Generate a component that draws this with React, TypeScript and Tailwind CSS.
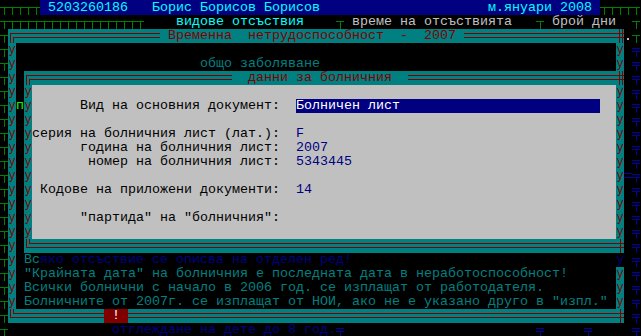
import React from 'react';

// DOS screen, 80 x 24 cells of 8 x 14 px

const GREEN = '#008000';
const BLUE = '#0000a8';

function place(items: [number, string][], len: number) {
  const a = Array(len).fill(' ');
  items.forEach(([at, s]) => {
    Array.from(s).forEach((ch, i) => {
      if (at + i < len) a[at + i] = ch;
    });
  });
  return a.join('');
}

function Tee({ color = GREEN, dbl = false }: { color?: string; dbl?: boolean }) {
  return (
    <svg width="8" height="14" className="block shrink-0">
      {dbl ? (
        <>
          <rect x="0" y="5" width="8" height="1" fill={color} />
          <rect x="0" y="8" width="8" height="1" fill={color} />
          <rect x="4" y="8" width="1" height="6" fill={color} />
        </>
      ) : (
        <>
          <rect x="0" y="6" width="8" height="1" fill={color} />
          <rect x="4" y="6" width="1" height="8" fill={color} />
        </>
      )}
    </svg>
  );
}

function Tees({ n }: { n: number }) {
  return (
    <>
      {Array.from({ length: n }).map((_, i) => (
        <Tee key={i} />
      ))}
    </>
  );
}

function S({ c, children }: { c: string; children?: React.ReactNode }) {
  return <span className={'block h-[14px] shrink-0 overflow-hidden whitespace-pre ' + c}>{children}</span>;
}

// mis-decoded vertical border glyph
function Y({ c = 'bg-[#008080] text-[#800000]' }: { c?: string }) {
  return (
    <span className={'block w-[8px] h-[14px] shrink-0 overflow-hidden text-center text-[12px] leading-[14px] ' + c}>у</span>
  );
}

// double horizontal line on teal
function DL({ c }: { c: string }) {
  return (
    <span className={'block h-[14px] shrink-0 bg-[#008080] pt-[4px] ' + c}>
      <span className="block h-[5px] border-y border-[#800000]" />
    </span>
  );
}

function Corner({ kind }: { kind: 'tl' | 'bl' | 'x' | 'xs' }) {
  const m = '#800000';
  return (
    <svg width="8" height="14" className="block shrink-0 bg-[#008080]">
      {kind === 'tl' && (
        <>
          <rect x="2" y="4" width="6" height="1" fill={m} />
          <rect x="2" y="4" width="1" height="10" fill={m} />
          <rect x="5" y="8" width="3" height="1" fill={m} />
          <rect x="5" y="8" width="1" height="6" fill={m} />
        </>
      )}
      {kind === 'bl' && (
        <>
          <rect x="2" y="0" width="1" height="9" fill={m} />
          <rect x="2" y="8" width="6" height="1" fill={m} />
          <rect x="5" y="0" width="1" height="5" fill={m} />
          <rect x="5" y="4" width="3" height="1" fill={m} />
        </>
      )}
      {kind === 'x' && (
        <>
          <rect x="0" y="4" width="8" height="1" fill={m} />
          <rect x="0" y="8" width="8" height="1" fill={m} />
          <rect x="3" y="0" width="1" height="14" fill={m} />
          <rect x="6" y="0" width="1" height="14" fill={m} />
        </>
      )}
      {kind === 'xs' && (
        <>
          <rect x="0" y="4" width="8" height="1" fill={m} />
          <rect x="0" y="8" width="8" height="1" fill={m} />
          <rect x="4" y="0" width="1" height="14" fill={m} />
        </>
      )}
    </svg>
  );
}

const Blk = () => <S c="w-[8px] bg-black" />;

// rows 3..21 share the outer window edges
function Outer({ children, r77, r78 }: { children: React.ReactNode; r77?: React.ReactNode; r78?: React.ReactNode }) {
  return (
    <div className="flex h-[14px]">
      <Tee />
      <Y />
      {children}
      {r77 ?? <Y />}
      {r78 ?? <Blk />}
      <Tee color={BLUE} dbl />
    </div>
  );
}

function Inner({ children, c2, r78 }: { children?: React.ReactNode; c2?: React.ReactNode; r78?: React.ReactNode }) {
  return (
    <Outer r78={r78}>
      {c2 ?? <Blk />}
      <Y />
      <div className="flex w-[584px] h-[14px] bg-[#c0c0c0]">{children}</div>
    </Outer>
  );
}

function Field({ label, at, value }: { label: string; at: number; value: string }) {
  return (
    <>
      <S c="w-[264px] text-black">{place([[at, label]], 33)}</S>
      <S c="w-[320px] text-[#000080]">{value}</S>
    </>
  );
}

export default function App() {
  return (
    <div className="w-[641px] h-[336px] overflow-hidden bg-black font-['Liberation_Mono',monospace] text-[13.33px] leading-[14px]">
      {/* row 0 */}
      <div className="flex items-end h-[15px]">
        <Tees n={5} />
        <span className="block w-[560px] h-[15px] pt-[1px] bg-[#000080] text-[#00ffff] whitespace-pre overflow-hidden">
          {place([[1, '5203260186'], [14, 'Борис Борисов Борисов'], [56, 'м.януари 2008']], 70)}
        </span>
        <Tees n={5} />
      </div>

      {/* row 1 */}
      <div className="flex h-[14px]">
        <Tees n={18} />
        <S c="w-[192px] text-[#00ffff]">{place([[4, 'видове отсъствия']], 24)}</S>
        <Tee />
        <S c="w-[192px] text-[#c0c0c0]">{place([[1, 'време на отсъствията']], 24)}</S>
        <Tee />
        <S c="w-[88px] text-[#c0c0c0]">{place([[1, 'брой дни']], 11)}</S>
        <Tee />
      </div>

      {/* row 2: outer window title */}
      <div className="flex h-[14px]">
        <Tee />
        <Corner kind="tl" />
        <DL c="w-[144px]" />
        <S c="w-[304px] bg-[#008080] text-[#800000]">{' Временна  нетрудоспособност  -  2007 '}</S>
        <DL c="w-[152px]" />
        <Corner kind="x" />
        <span className="block w-[8px] h-[14px] shrink-0 pl-[3px] pt-[9px]">
          <span className="block w-[2px] h-[2px] bg-[#c0c0c0]" />
        </span>
        <Tee />
      </div>

      {/* rows 3-4 */}
      <Outer>
        <S c="w-[600px]" />
      </Outer>
      <Outer>
        <S c="w-[600px] text-[#008080]">{place([[23, 'общо заболяване']], 75)}</S>
      </Outer>

      {/* row 5: inner window title */}
      <Outer r77={<Corner kind="x" />}>
        <Blk />
        <Corner kind="tl" />
        <DL c="w-[200px]" />
        <S c="w-[176px] bg-[#008080] text-[#800000]">{'  данни за болничния  '}</S>
        <DL c="w-[208px]" />
      </Outer>

      {/* rows 6-16: form */}
      <Inner />
      <Inner c2={<S c="w-[8px] text-[#00ff00]">п</S>}>
        <S c="w-[264px] text-black">{place([[6, 'Вид на основния документ:']], 33)}</S>
        <S c="w-[304px] bg-[#000080] text-white">Болничен лист</S>
        <S c="w-[16px]" />
      </Inner>
      <Inner />
      <Inner>
        <Field label="серия на болничния лист (лат.):" at={0} value="F" />
      </Inner>
      <Inner>
        <Field label="година на болничния лист:" at={6} value="2007" />
      </Inner>
      <Inner>
        <Field label="номер на болничния лист:" at={7} value="5343445" />
      </Inner>
      <Inner
        r78={
          <span className="block w-[8px] h-[14px] shrink-0 pt-[4px]">
            <span className="block h-[5px] border-y border-[#0000a8]" />
          </span>
        }
      />
      <Inner>
        <Field label="Кодове на приложени документи:" at={1} value="14" />
      </Inner>
      <Inner />
      <Inner>
        <Field label={'"партида" на "болничния":'} at={6} value="" />
      </Inner>
      <Inner />

      {/* row 17: inner window bottom */}
      <Outer r77={<Corner kind="xs" />}>
        <Blk />
        <Corner kind="bl" />
        <DL c="w-[584px]" />
      </Outer>

      {/* rows 18-21: hints */}
      <Outer r77={<Y c="bg-black text-[#000080]" />}>
        <Blk />
        <S c="w-[592px] text-[#000080]">
          <span className="text-[#008080]">Вс</span>яко отсъствие се описва на отделен ред!
        </S>
      </Outer>
      <Outer>
        <Blk />
        <S c="w-[592px] text-[#008080]">"Крайната дата" на болничния е последната дата в неработоспособност!</S>
      </Outer>
      <Outer>
        <Blk />
        <S c="w-[592px] text-[#008080]">Всички болнични с начало в 2006 год. се изплащат от работодателя.</S>
      </Outer>
      <Outer>
        <Blk />
        <S c="w-[592px] text-[#008080]">Болничните от 2007г. се изплащат от НОИ, ако не е указано друго в "изпл."</S>
      </Outer>

      {/* row 22: outer window bottom */}
      <div className="flex h-[14px]">
        <Tee />
        <Corner kind="bl" />
        <DL c="w-[88px]" />
        <S c="w-[24px] bg-[#800000] text-white">{' ! '}</S>
        <DL c="w-[488px]" />
        <Corner kind="xs" />
        <Blk />
        <Tee color={BLUE} dbl />
      </div>

      {/* row 23 */}
      <div className="flex h-[14px]">
        <Tee />
        <S c="w-[104px]" />
        <S c="w-[224px] text-[#000080]">отглеждане на дете до 8 год.</S>
        <Tee color={BLUE} dbl />
        <S c="w-[192px]" />
        <Tee color={BLUE} dbl />
        <S c="w-[40px]" />
        <Tee color={BLUE} dbl />
        <S c="w-[40px]" />
        <Tee color={BLUE} dbl />
      </div>
    </div>
  );
}
